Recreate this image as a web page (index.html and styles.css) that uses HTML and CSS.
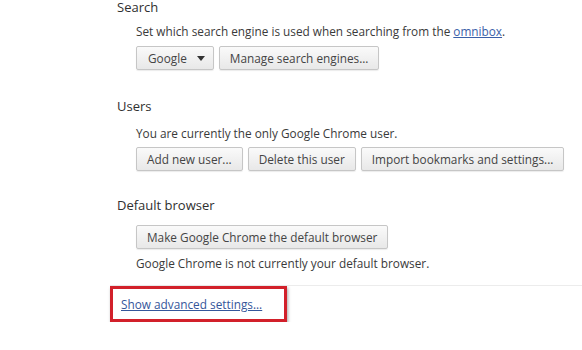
FILE: index.html
```html
<!DOCTYPE html>
<html lang="en">
<head>
    <meta charset="UTF-8">
    <title>Settings</title>
    <link rel="stylesheet" href="styles.css">
</head>
<body>
    <main class="settings">
        <section class="group group-search">
            <h3>Search</h3>
            <div class="group-body">
                <p>Set which search engine is used when searching from the <a href="#">omnibox</a>.</p>
                <div class="btn-row">
                    <button class="btn btn-select">Google <span class="caret"></span></button>
                    <button class="btn">Manage search engines...</button>
                </div>
            </div>
        </section>
        <section class="group group-users">
            <h3>Users</h3>
            <div class="group-body">
                <p>You are currently the only Google Chrome user.</p>
                <div class="btn-row">
                    <button class="btn">Add new user...</button>
                    <button class="btn">Delete this user</button>
                    <button class="btn">Import bookmarks and settings...</button>
                </div>
            </div>
        </section>
        <section class="group group-browser">
            <h3>Default browser</h3>
            <div class="group-body">
                <div class="btn-row">
                    <button class="btn btn-wide">Make Google Chrome the default browser</button>
                </div>
                <p class="note">Google Chrome is not currently your default browser.</p>
            </div>
        </section>
        <footer class="advanced">
            <div class="highlight">
                <a href="#">Show advanced settings...</a>
            </div>
        </footer>
    </main>
</body>
</html>
```

FILE: styles.css
```css
body {
    margin: 0;
    background-color: #fff;
    font-family: 'Open Sans', 'Noto Sans', sans-serif;
    color: #3a3a3a;
    overflow: hidden;
}

.settings {
    margin-top: -2px;
    padding-left: 117px;
}

h3 {
    margin: 0;
    font-size: 13px;
    font-weight: normal;
    line-height: 18px;
    color: #303030;
}

.group-body {
    padding-left: 19px;
}

p {
    margin: 0;
    font-size: 11.8px;
    line-height: 18px;
}

a {
    color: #3a5fa8;
}

.group-search .group-body p {
    margin-top: 6px;
}

.group-search .btn-row {
    margin-top: 6px;
}

.group-users {
    margin-top: 27px;
}

.group-users .group-body p {
    margin-top: 9px;
}

.group-browser {
    margin-top: 25px;
}

.btn-row {
    display: flex;
    gap: 5px;
    margin-top: 5px;
}

.group-browser .btn-row {
    margin-top: 11px;
}

.btn {
    height: 24px;
    padding: 0 10px;
    font-family: inherit;
    font-size: 11.8px;
    color: #444;
    background: linear-gradient(#fafafa, #e8e8e8);
    border: 1px solid #c6c6c6;
    border-radius: 2px;
    box-shadow: 0 1px 1px rgba(0, 0, 0, 0.08);
}

.btn-select {
    display: flex;
    align-items: center;
    gap: 10px;
    padding: 0 8px 0 11px;
}

.caret {
    width: 0;
    height: 0;
    border-left: 4px solid transparent;
    border-right: 4px solid transparent;
    border-top: 5px solid #333;
}

.note {
    margin-top: 5px;
}

.advanced {
    margin-top: 13px;
    margin-left: -7px;
    border-top: 1px solid #ececec;
}

.highlight {
    width: 163px;
    height: 30px;
    display: flex;
    align-items: center;
    padding-left: 8px;
    border: 3px solid #d2202a;
    box-shadow: 1px 2px 3px rgba(0, 0, 0, 0.35);
    font-size: 11.8px;
}

.highlight a {
    color: #35569a;
}
```
